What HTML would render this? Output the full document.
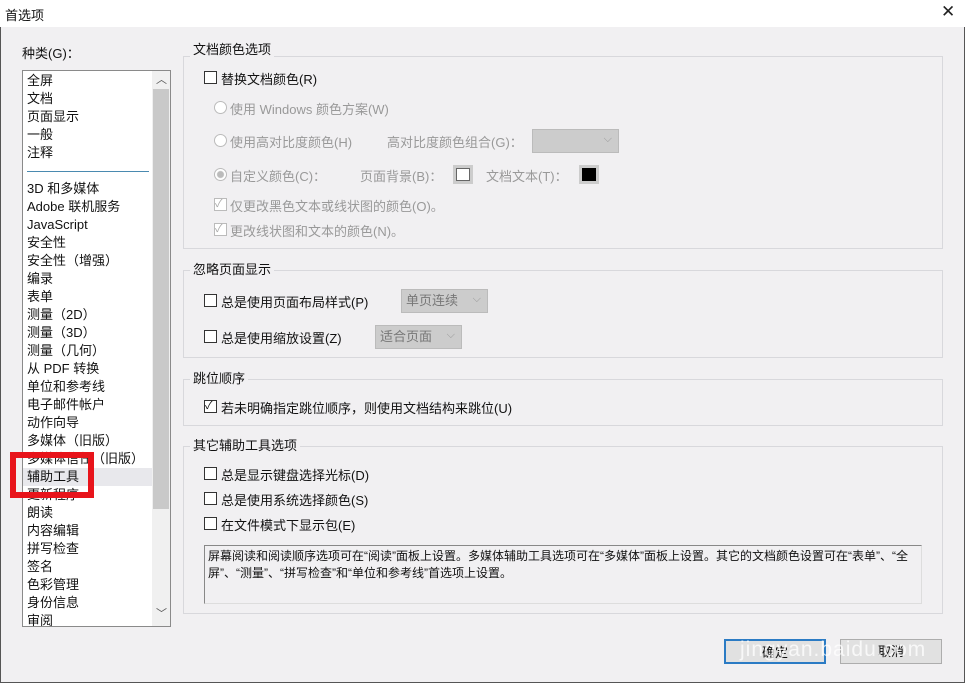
<!DOCTYPE html>
<html><head><meta charset="utf-8"><style>
*{margin:0;padding:0;box-sizing:border-box}
body{width:965px;height:683px;background:#f1f0f2;font-family:"Liberation Sans","Noto Sans CJK SC",sans-serif;font-size:13px;color:#111;position:relative;overflow:hidden}
.a{position:absolute;white-space:nowrap}
.title{left:0;top:0;width:965px;height:27px;background:#fff}
.frame{left:0;top:27px;width:965px;height:656px;border:1px solid #555;border-top:none}
.list{left:22px;top:70px;width:149px;height:557px;background:#fff;border:1px solid #8a8a8a;overflow:hidden}
.list div{position:absolute;left:4px;line-height:18px;font-size:13px}
.grp{position:absolute;border:1px solid #d8d8dc}
.gt{position:absolute;background:#f1f0f2;padding:0 3px;font-size:13px;line-height:14px}
.cb{position:absolute;width:13px;height:13px;border:1px solid #333;background:#fff}
.cbd{border-color:#bbb}
.rd{position:absolute;width:13px;height:13px;border:1px solid #bbb;border-radius:50%;background:#fff}
.dis{color:#999}
.dd{position:absolute;background:#ccc;border:1px solid #bbb;color:#777;padding-left:4px;line-height:22px}
.dd:after{content:"⌵";position:absolute;right:6px;top:-2px;color:#999;font-size:11px}
.btn{position:absolute;height:25px;background:#e1e1e1;border:1px solid #adadad;text-align:center;line-height:23px}
</style></head><body>
<div class="a title"></div>
<div class="a" style="left:5px;top:5px;font-size:13px">首选项</div>
<div class="a" style="left:941px;top:2px;font-size:17px;color:#222">✕</div>
<div class="a frame"></div>
<div class="a" style="left:22px;top:43px">种类(G)：</div>
<div class="a list">
<div style="top:1px">全屏</div><div style="top:19px">文档</div><div style="top:37px">页面显示</div><div style="top:55px">一般</div><div style="top:73px">注释</div>
<div style="top:100px;left:4px;width:122px;height:1px;background:#4a8ab0"></div>
<div style="top:109px">3D 和多媒体</div><div style="top:127px">Adobe 联机服务</div><div style="top:145px">JavaScript</div><div style="top:163px">安全性</div><div style="top:181px">安全性（增强）</div><div style="top:199px">编录</div><div style="top:217px">表单</div><div style="top:235px">测量（2D）</div><div style="top:253px">测量（3D）</div><div style="top:271px">测量（几何）</div><div style="top:289px">从 PDF 转换</div><div style="top:307px">单位和参考线</div><div style="top:325px">电子邮件帐户</div><div style="top:343px">动作向导</div><div style="top:361px">多媒体（旧版）</div><div style="top:379px">多媒体信任（旧版）</div>
<div style="top:397px;left:0;width:129px;height:18px;background:#e8e8ec"></div>
<div style="top:397px">辅助工具</div><div style="top:415px">更新程序</div><div style="top:433px">朗读</div><div style="top:451px">内容编辑</div><div style="top:469px">拼写检查</div><div style="top:487px">签名</div><div style="top:505px">色彩管理</div><div style="top:523px">身份信息</div><div style="top:541px">审阅</div>
<div style="left:129px;top:0;width:18px;height:555px;background:#f0f0f0"></div>
<div style="left:130px;top:18px;width:16px;height:420px;background:#c9c9c9"></div>
<div style="left:133px;top:0;color:#555;font-size:11px">︿</div>
<div style="left:133px;top:534px;color:#555;font-size:11px">﹀</div>
</div>
<div class="a" style="left:10px;top:452px;width:84px;height:46px;border:6px solid #e8141b"></div>

<div class="grp" style="left:183px;top:56px;width:760px;height:193px"></div>
<div class="gt" style="left:190px;top:43px">文档颜色选项</div>
<div class="cb" style="left:204px;top:71px"></div><div class="a" style="left:221px;top:69px">替换文档颜色(R)</div>
<div class="rd" style="left:214px;top:101px"></div><div class="a dis" style="left:230px;top:99px">使用 Windows 颜色方案(W)</div>
<div class="rd" style="left:214px;top:134px"></div><div class="a dis" style="left:230px;top:132px">使用高对比度颜色(H)</div>
<div class="a dis" style="left:387px;top:132px">高对比度颜色组合(G)：</div>
<div class="dd" style="left:532px;top:129px;width:87px;height:24px"></div>
<div class="rd" style="left:214px;top:168px;background:radial-gradient(#bbb 3px,#fff 4px)"></div><div class="a dis" style="left:230px;top:166px">自定义颜色(C)：</div>
<div class="a dis" style="left:360px;top:166px">页面背景(B)：</div>
<div class="a" style="left:453px;top:165px;width:20px;height:19px;background:#ccc;padding:3px"><div style="width:14px;height:13px;background:#fff;border:1px solid #666"></div></div>
<div class="a dis" style="left:486px;top:166px">文档文本(T)：</div>
<div class="a" style="left:579px;top:165px;width:20px;height:19px;background:#ccc;padding:3px"><div style="width:14px;height:13px;background:#000"></div></div>
<div class="cb cbd" style="left:214px;top:198px;color:#aaa;font-size:11px;line-height:11px">✓</div><div class="a dis" style="left:230px;top:196px">仅更改黑色文本或线状图的颜色(O)。</div>
<div class="cb cbd" style="left:214px;top:223px;color:#aaa;font-size:11px;line-height:11px">✓</div><div class="a dis" style="left:230px;top:221px">更改线状图和文本的颜色(N)。</div>

<div class="grp" style="left:183px;top:270px;width:760px;height:88px"></div>
<div class="gt" style="left:190px;top:263px">忽略页面显示</div>
<div class="cb" style="left:204px;top:294px"></div><div class="a" style="left:221px;top:292px">总是使用页面布局样式(P)</div>
<div class="dd" style="left:401px;top:289px;width:87px;height:24px">单页连续</div>
<div class="cb" style="left:204px;top:330px"></div><div class="a" style="left:221px;top:328px">总是使用缩放设置(Z)</div>
<div class="dd" style="left:375px;top:325px;width:87px;height:24px">适合页面</div>

<div class="grp" style="left:183px;top:379px;width:760px;height:47px"></div>
<div class="gt" style="left:190px;top:372px">跳位顺序</div>
<div class="cb" style="left:204px;top:400px;font-size:11px;line-height:11px">✓</div><div class="a" style="left:221px;top:398px">若未明确指定跳位顺序，则使用文档结构来跳位(U)</div>

<div class="grp" style="left:183px;top:446px;width:760px;height:168px"></div>
<div class="gt" style="left:190px;top:439px">其它辅助工具选项</div>
<div class="cb" style="left:204px;top:467px"></div><div class="a" style="left:221px;top:465px">总是显示键盘选择光标(D)</div>
<div class="cb" style="left:204px;top:492px"></div><div class="a" style="left:221px;top:490px">总是使用系统选择颜色(S)</div>
<div class="cb" style="left:204px;top:517px"></div><div class="a" style="left:221px;top:515px">在文件模式下显示包(E)</div>
<div class="a" style="left:204px;top:545px;width:718px;height:59px;border:1px solid #888;border-right-color:#ddd;border-bottom-color:#ddd;background:#f1f0f2;white-space:normal;font-size:12px;line-height:17px;padding:2px 3px">屏幕阅读和阅读顺序选项可在“阅读”面板上设置。多媒体辅助工具选项可在“多媒体”面板上设置。其它的文档颜色设置可在“表单”、“全屏”、“测量”、“拼写检查”和“单位和参考线”首选项上设置。</div>

<div class="btn" style="left:724px;top:639px;width:102px;border:2px solid #2b7bc4">确定</div>
<div class="btn" style="left:840px;top:639px;width:102px">取消</div>
<div class="a" style="left:740px;top:638px;font-size:21px;color:rgba(255,255,255,0.75);letter-spacing:1px">jingyan.baidu.com</div>
</body></html>
